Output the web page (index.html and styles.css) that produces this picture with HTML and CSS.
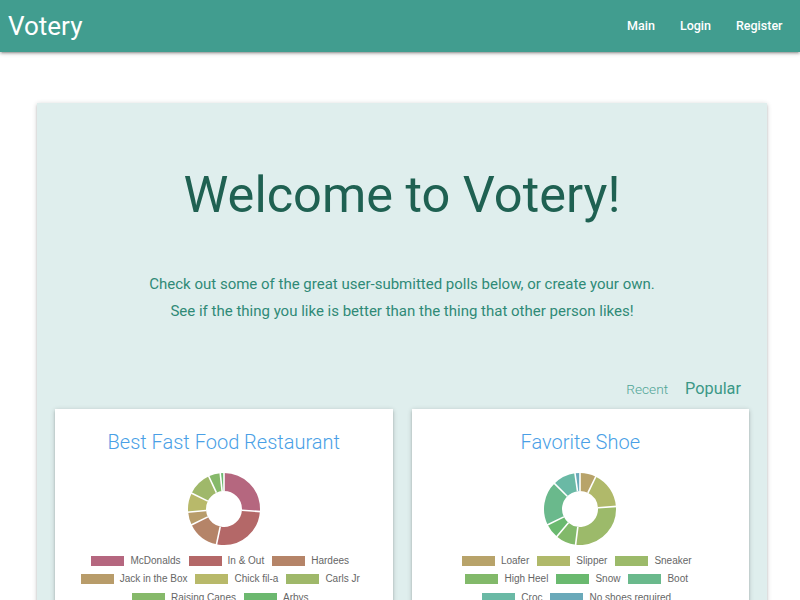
FILE: index.html
```html
<!DOCTYPE html>
<html>
<head>
<meta charset="utf-8">
<link rel="stylesheet" href="styles.css">
</head>
<body>
<nav class="navbar">
  <a class="brand">Votery</a>
  <ul class="nav-links">
    <li><a>Main</a></li>
    <li><a>Login</a></li>
    <li><a>Register</a></li>
  </ul>
</nav>
<div class="page">
  <main class="hero">
    <h1 class="hero-title">Welcome to Votery!</h1>
    <p class="hero-text">Check out some of the great user-submitted polls below, or create your own.<br>See if the thing you like is better than the thing that other person likes!</p>
    <div class="tabs">
      <span class="tab">Recent</span>
      <span class="tab tab-active">Popular</span>
    </div>
    <div class="cards">
      <section class="card">
        <h2 class="card-title">Best Fast Food Restaurant</h2>
        <svg class="donut" width="80" height="80" viewBox="0 0 80 80">
          <g fill="none" stroke-width="18">
            <circle cx="40" cy="40" r="27" stroke="#b5677f" stroke-dasharray="44.3 200" transform="rotate(-90 40 40)"/>
            <circle cx="40" cy="40" r="27" stroke="#b46868" stroke-dasharray="46.2 200" transform="rotate(4 40 40)"/>
            <circle cx="40" cy="40" r="27" stroke="#b58468" stroke-dasharray="24.5 200" transform="rotate(102 40 40)"/>
            <circle cx="40" cy="40" r="27" stroke="#b89c6a" stroke-dasharray="9.9 200" transform="rotate(154 40 40)"/>
            <circle cx="40" cy="40" r="27" stroke="#b8b96a" stroke-dasharray="14.6 200" transform="rotate(175 40 40)"/>
            <circle cx="40" cy="40" r="27" stroke="#9fb86a" stroke-dasharray="18.4 200" transform="rotate(206 40 40)"/>
            <circle cx="40" cy="40" r="27" stroke="#86b96a" stroke-dasharray="9.0 200" transform="rotate(245 40 40)"/>
            <circle cx="40" cy="40" r="27" stroke="#6cb86f" stroke-dasharray="2.9 200" transform="rotate(264 40 40)"/>
          </g>
          <g stroke="#fff" stroke-width="1.6">
            <line x1="40" y1="22" x2="40" y2="3"/>
            <line x1="40" y1="22" x2="40" y2="3" transform="rotate(94 40 40)"/>
            <line x1="40" y1="22" x2="40" y2="3" transform="rotate(192 40 40)"/>
            <line x1="40" y1="22" x2="40" y2="3" transform="rotate(244 40 40)"/>
            <line x1="40" y1="22" x2="40" y2="3" transform="rotate(265 40 40)"/>
            <line x1="40" y1="22" x2="40" y2="3" transform="rotate(296 40 40)"/>
            <line x1="40" y1="22" x2="40" y2="3" transform="rotate(335 40 40)"/>
            <line x1="40" y1="22" x2="40" y2="3" transform="rotate(354 40 40)"/>
          </g>
        </svg>
        <ul class="legend">
          <li><i class="sw" style="background:#b5677f"></i>McDonalds</li>
          <li><i class="sw" style="background:#b46868"></i>In &amp; Out</li>
          <li><i class="sw" style="background:#b58468"></i>Hardees</li>
          <li><i class="sw" style="background:#b89c6a"></i>Jack in the Box</li>
          <li><i class="sw" style="background:#b8b96a"></i>Chick fil-a</li>
          <li><i class="sw" style="background:#9fb86a"></i>Carls Jr</li>
          <li><i class="sw" style="background:#86b96a"></i>Raising Canes</li>
          <li><i class="sw" style="background:#6cb86f"></i>Arbys</li>
        </ul>
      </section>
      <section class="card">
        <h2 class="card-title">Favorite Shoe</h2>
        <svg class="donut" width="80" height="80" viewBox="0 0 80 80">
          <g fill="none" stroke-width="18">
            <circle cx="40" cy="40" r="27" stroke="#b8a36a" stroke-dasharray="12.25 200" transform="rotate(-90 40 40)"/>
            <circle cx="40" cy="40" r="27" stroke="#b0b96a" stroke-dasharray="28.3 200" transform="rotate(-64 40 40)"/>
            <circle cx="40" cy="40" r="27" stroke="#9cba6a" stroke-dasharray="47.6 200" transform="rotate(-4 40 40)"/>
            <circle cx="40" cy="40" r="27" stroke="#82b96a" stroke-dasharray="15.6 200" transform="rotate(97 40 40)"/>
            <circle cx="40" cy="40" r="27" stroke="#6ab96f" stroke-dasharray="11.3 200" transform="rotate(130 40 40)"/>
            <circle cx="40" cy="40" r="27" stroke="#6ab98c" stroke-dasharray="33.5 200" transform="rotate(154 40 40)"/>
            <circle cx="40" cy="40" r="27" stroke="#6ab9a5" stroke-dasharray="17.4 200" transform="rotate(225 40 40)"/>
            <circle cx="40" cy="40" r="27" stroke="#6aa9b9" stroke-dasharray="3.9 200" transform="rotate(262 40 40)"/>
          </g>
          <g stroke="#fff" stroke-width="1.6">
            <line x1="40" y1="22" x2="40" y2="3"/>
            <line x1="40" y1="22" x2="40" y2="3" transform="rotate(26 40 40)"/>
            <line x1="40" y1="22" x2="40" y2="3" transform="rotate(86 40 40)"/>
            <line x1="40" y1="22" x2="40" y2="3" transform="rotate(187 40 40)"/>
            <line x1="40" y1="22" x2="40" y2="3" transform="rotate(220 40 40)"/>
            <line x1="40" y1="22" x2="40" y2="3" transform="rotate(244 40 40)"/>
            <line x1="40" y1="22" x2="40" y2="3" transform="rotate(315 40 40)"/>
            <line x1="40" y1="22" x2="40" y2="3" transform="rotate(352 40 40)"/>
          </g>
        </svg>
        <ul class="legend">
          <li><i class="sw" style="background:#b8a36a"></i>Loafer</li>
          <li><i class="sw" style="background:#b0b96a"></i>Slipper</li>
          <li><i class="sw" style="background:#9cba6a"></i>Sneaker</li>
          <li><i class="sw" style="background:#82b96a"></i>High Heel</li>
          <li><i class="sw" style="background:#6ab96f"></i>Snow</li>
          <li><i class="sw" style="background:#6ab98c"></i>Boot</li>
          <li><i class="sw" style="background:#6ab9a5"></i>Croc</li>
          <li><i class="sw" style="background:#6aa9b9"></i>No shoes required</li>
        </ul>
      </section>
    </div>
  </main>
</div>
</body>
</html>
```

FILE: styles.css
```css
* { box-sizing: border-box; }
html, body { margin: 0; padding: 0; }
body {
  font-family: Roboto, "Liberation Sans", sans-serif;
  background: #fff;
  overflow: hidden;
}
.navbar {
  height: 52px;
  background: #419d8f;
  display: flex;
  align-items: center;
  justify-content: space-between;
  padding: 0 5px 0 8px;
  box-shadow: 0 2px 2px 0 rgba(0,0,0,0.14), 0 3px 1px -2px rgba(0,0,0,0.12), 0 1px 5px 0 rgba(0,0,0,0.2);
  position: relative;
  z-index: 2;
}
.brand {
  color: #fff;
  font-size: 26px;
  line-height: 50px;
}
.nav-links {
  list-style: none;
  margin: 0;
  padding: 0;
  display: flex;
}
.nav-links a {
  display: block;
  color: #fff;
  font-size: 12.5px;
  font-weight: 500;
  padding: 0 12.5px;
  line-height: 50px;
}
.page {
  padding: 51px 33px 0 37px;
}
.hero {
  background: #dfeeed;
  padding: 64px 18px 40px;
  box-shadow: 0 2px 2px 0 rgba(0,0,0,0.14), 0 3px 1px -2px rgba(0,0,0,0.12), 0 1px 5px 0 rgba(0,0,0,0.2);
}
.hero-title {
  margin: 0;
  text-align: center;
  font-size: 50.5px;
  font-weight: 400;
  line-height: 1.1;
  color: #1f6152;
}
.hero-text {
  margin: 48px 0 0;
  text-align: center;
  font-size: 15px;
  line-height: 27px;
  color: #2f8a77;
}
.tabs {
  display: flex;
  justify-content: flex-end;
  align-items: baseline;
  gap: 17px;
  margin-top: 54px;
  padding-right: 8px;
  height: 30px;
}
.tab {
  font-size: 13.7px;
  font-weight: 300;
  color: #4fa595;
}
.tab-active {
  font-size: 16.3px;
  font-weight: 400;
  color: #3b9887;
}
.cards {
  display: flex;
  gap: 19px;
}
.card {
  flex: 1;
  background: #fff;
  padding: 21px 0 20px;
  display: flex;
  flex-direction: column;
  align-items: center;
  box-shadow: 0 2px 2px 0 rgba(0,0,0,0.14), 0 3px 1px -2px rgba(0,0,0,0.12), 0 1px 5px 0 rgba(0,0,0,0.2);
}
.card-title {
  margin: 0;
  font-size: 20px;
  line-height: 24px;
  font-weight: 300;
  color: #4a9fe6;
}
.donut {
  display: block;
  margin-top: 15px;
}
.legend {
  list-style: none;
  margin: 6px 0 0;
  padding: 0 31px 0 24px;
  display: flex;
  flex-wrap: wrap;
  justify-content: center;
  column-gap: 8px;
  row-gap: 6.5px;
}
.legend li {
  display: flex;
  align-items: center;
  font-family: "Liberation Sans", Arial, sans-serif;
  font-size: 10px;
  line-height: 12px;
  color: #666;
}
.sw {
  display: inline-block;
  width: 33px;
  height: 10px;
  margin-right: 6px;
}
```
